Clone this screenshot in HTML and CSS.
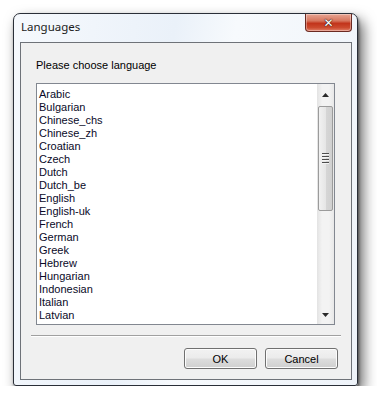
FILE: index.html
```html
<!DOCTYPE html>
<html>
<head>
<meta charset="utf-8">
<link rel="stylesheet" href="styles.css">
</head>
<body>
<div class="window">
  <div class="titlebar">
    <span class="title">Languages</span>
    <div class="close"><span class="x">&#x2715;</span></div>
  </div>
  <div class="client">
    <div class="label">Please choose language</div>
    <div class="listbox">
      <div class="items">
        <div>Arabic</div>
        <div>Bulgarian</div>
        <div>Chinese_chs</div>
        <div>Chinese_zh</div>
        <div>Croatian</div>
        <div>Czech</div>
        <div>Dutch</div>
        <div>Dutch_be</div>
        <div>English</div>
        <div>English-uk</div>
        <div>French</div>
        <div>German</div>
        <div>Greek</div>
        <div>Hebrew</div>
        <div>Hungarian</div>
        <div>Indonesian</div>
        <div>Italian</div>
        <div>Latvian</div>
      </div>
      <div class="scrollbar">
        <div class="arrow up"><svg width="7" height="4" viewBox="0 0 7 4"><path d="M0 4 L3.5 0 L7 4 Z" fill="#2b2b2b"/></svg></div>
        <div class="track">
          <div class="thumb"><div class="grip"><i></i><i></i><i></i><i></i></div></div>
        </div>
        <div class="arrow down"><svg width="7" height="4" viewBox="0 0 7 4"><path d="M0 0 L7 0 L3.5 4 Z" fill="#2b2b2b"/></svg></div>
      </div>
    </div>
    <div class="sep"></div>
    <div class="buttons">
      <div class="btn">OK</div>
      <div class="btn">Cancel</div>
    </div>
  </div>
</div>
</body>
</html>
```
FILE: styles.css
```css
html, body { margin: 0; padding: 0; background: #ffffff; }
body { padding: 13px 0 0 13px; }
.window {
  width: 343px;
  height: 371px;
  border: 1px solid #2a2f38;
  border-radius: 7px 7px 3px 3px;
  background: linear-gradient(100deg, #f6f9fd 0%, #eaf1f9 40%, #f7fafd 55%, #eef3f9 100%);
  box-shadow: 5px 7px 14px rgba(0,0,0,0.6), 1px 2px 3px rgba(0,0,0,0.45);
  display: flex;
  flex-direction: column;
  font-family: "Liberation Sans", Arial, sans-serif;
}
.titlebar {
  height: 28px;
  display: flex;
  align-items: flex-start;
  justify-content: space-between;
}
.title {
  font-family: "Noto Sans", "Open Sans", sans-serif;
  font-size: 11.5px;
  color: #1b1b1b;
  margin: 6px 0 0 7px;
  line-height: 14px;
}
.close {
  width: 45px;
  height: 17px;
  margin-right: 5px;
  border: 1px solid #6b2a22;
  border-top: none;
  border-radius: 0 0 4px 4px;
  background: linear-gradient(#e8a593 0%, #d7765e 40%, #c2341b 55%, #cc4a2e 80%, #e2816a 100%);
  display: flex;
  align-items: center;
  justify-content: center;
  box-shadow: inset 0 0 0 1px rgba(255,255,255,0.35);
}
.x {
  color: #ffffff;
  font-family: "DejaVu Sans", sans-serif;
  font-weight: bold;
  font-size: 12px;
  line-height: 12px;
  text-shadow: 0 0 1px #3a1a14, 0 0 1px #3a1a14, 0 0 1px #3a1a14;
}
.client {
  margin: 0 5px 5px 6px;
  flex: 1;
  border: 1px solid #6e7278;
  background: #f0f0f0;
  padding: 16px 0 0 0;
  font-size: 11px;
  color: #000;
}
.label {
  margin-left: 15px;
  line-height: 13px;
}
.listbox {
  margin: 11px 0 0 15px;
  width: 297px;
  height: 240px;
  border: 1px solid #828790;
  background: #ffffff;
  display: flex;
}
.items {
  flex: 1;
  padding: 4px 0 0 2px;
  line-height: 13px;
  color: #0a0a28;
  overflow: hidden;
}
.scrollbar {
  width: 17px;
  display: flex;
  flex-direction: column;
  background: linear-gradient(90deg, #e3e3e3, #f3f3f3 30%, #f3f3f3 70%, #e8e8e8);
}
.arrow {
  height: 17px;
  display: flex;
  align-items: center;
  justify-content: center;
}
.arrow.up { margin-top: 2px; }
.arrow.down { margin-bottom: 1px; }
.track {
  flex: 1;
  padding: 3px 1px 0 1px;
}
.thumb {
  height: 103px;
  border: 1px solid #9b9b9b;
  border-radius: 2px;
  background: linear-gradient(90deg, #f1f1f1 0%, #e6e6e6 50%, #d6d6d6 51%, #d0d0d0 100%);
  display: flex;
  align-items: center;
  justify-content: center;
}
.grip { display: flex; flex-direction: column; gap: 1px; }
.grip i {
  display: block;
  width: 7px;
  height: 1px;
  background: #4d4d4d;
  border-bottom: 1px solid #f4f4f4;
}
.sep {
  margin: 10px 10px 0 10px;
  height: 1px;
  background: #a0a0a0;
  border-bottom: 1px solid #ffffff;
}
.buttons {
  margin: 11px 13px 0 0;
  display: flex;
  justify-content: flex-end;
  gap: 8px;
}
.btn {
  width: 71px;
  height: 19px;
  border: 1px solid #707070;
  border-radius: 3px;
  background: linear-gradient(#f2f2f2 0%, #ebebeb 48%, #dddddd 52%, #cfcfcf 100%);
  box-shadow: inset 0 0 0 1px #fcfcfc;
  display: flex;
  align-items: center;
  justify-content: center;
  font-size: 11px;
  color: #000;
}
```
